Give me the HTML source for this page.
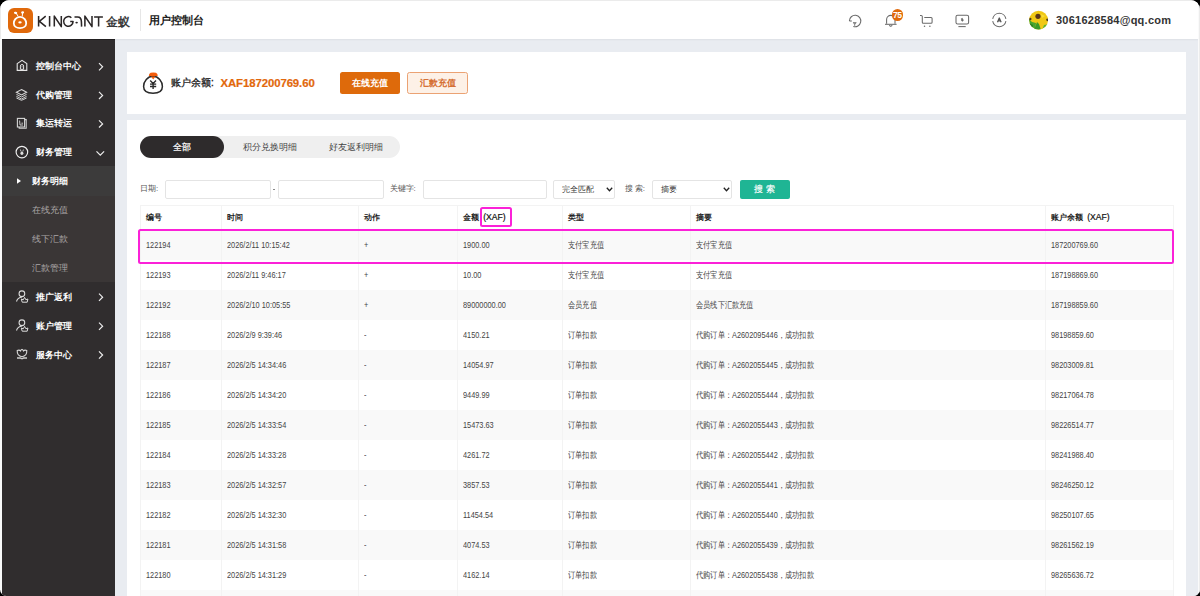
<!DOCTYPE html>
<html><head><meta charset="utf-8">
<style>
*{box-sizing:border-box;margin:0;padding:0}
html,body{width:1200px;height:596px;overflow:hidden;background:#000;font-family:"Liberation Sans",sans-serif}
.win{position:absolute;left:0;top:0;width:1200px;height:596px;border-radius:9.5px 9.5px 6.5px 6.5px;overflow:hidden;background:#fafafa}
.abs{position:absolute}
.hdr{position:absolute;left:1px;top:1px;width:1197px;height:38px;background:#fff}
.side{position:absolute;left:2px;top:39px;width:113px;height:560px;background:#302d2e}
.main{position:absolute;left:115px;top:39px;width:1083px;height:560px;background:#e9ecf1}
.shadow{position:absolute;left:115px;top:39px;width:1083px;height:2px;background:linear-gradient(#dde0e5,#e9ecf1)}
.card{position:absolute;background:#fff}
.t{position:absolute;white-space:nowrap;line-height:1}
.mi{position:absolute;left:0;width:113px;height:29px}
.mi .tx{position:absolute;left:33.5px;top:9.5px;font-size:9px;font-weight:bold;color:#fff;line-height:1;white-space:nowrap}
.mi .chev{position:absolute;left:96px;top:10px;width:6px;height:9px}
.sub .tx{position:absolute;left:31px;top:9.5px;font-size:9px;color:#a8a5a5;line-height:1;white-space:nowrap}
.tbl{position:absolute;left:140px;top:204.5px;width:1033px;border-collapse:collapse;table-layout:fixed;font-size:9.2px;color:#454545}
.tbl td i{font-style:normal;display:inline-block;transform:scaleX(.80);transform-origin:0 50%}
.tbl td,.tbl th{border:1px solid #f3f3f3;border-top:0;border-bottom:0;padding:0 0 0 5px;text-align:left;white-space:nowrap;overflow:hidden}
.tbl th{height:25px;border-top:1px solid #f3f3f3;font-weight:bold;font-size:7.6px;color:#222;letter-spacing:0}
.tbl td{height:30px}
.tbl tr.g td{background:#f9f9f9}
.inp{position:absolute;top:180px;height:18.5px;border:1px solid #e4e4e4;border-radius:2px;background:#fff}
.lbl{position:absolute;top:185px;font-size:8px;color:#555;line-height:1;white-space:nowrap}
</style></head><body>
<div class="win">
  <div class="abs" style="left:0;top:0;width:1200px;height:1px;background:#ebebeb"></div>
  <div class="abs" style="left:0;top:0;width:1.5px;height:39px;background:#ebebeb"></div>
  <div class="abs" style="left:1198.5px;top:0;width:1.5px;height:596px;background:#ececec"></div>
  <div class="hdr"></div>
  <!-- logo -->
  <svg class="abs" style="left:8px;top:8px" width="25" height="25" viewBox="0 0 25 25">
    <rect x="0" y="0" width="25" height="25" rx="6" fill="#e0690b"/>
    <path d="M12 8.9 C16.3 8.9 18.2 12.6 18.2 15.2 C18.2 18.4 15.4 20.1 12 20.1 C8.6 20.1 5.8 18.4 5.8 15.2 C5.8 12.6 7.7 8.9 12 8.9 Z" fill="none" stroke="#fff" stroke-width="1.8"/>
    <ellipse cx="12" cy="14.4" rx="1.7" ry="1.1" fill="#fff"/>
    <path d="M8.2 5.2 L10.3 8.6 M14.6 5 L14.2 8.6" stroke="#fff" stroke-width="1" fill="none"/>
    <ellipse cx="7.6" cy="4.9" rx="1.7" ry="1.15" fill="#fff" transform="rotate(15 7.6 4.9)"/>
    <ellipse cx="14.6" cy="4.4" rx="1.5" ry="1.1" fill="#fff" transform="rotate(-10 14.6 4.4)"/>
  </svg>
  <svg class="abs" style="left:0;top:0" width="110" height="36" viewBox="0 0 110 36" fill="none" stroke="#2a2626" stroke-width="1.55" stroke-linejoin="round">
    <path d="M38.6 16.1 V26.6 M45.7 16.2 L39.4 21.3 L45.9 26.6"/>
    <path d="M49.6 16.1 V26.6"/>
    <path d="M54.3 26.6 V16.1 L61.3 26.6 V16.1"/>
    <path d="M71.37 17.72 A4.7 4.85 0 1 0 73.05 21.4 H70.2"/>
    <path d="M74.5 16.9 H77.6 C80.1 16.9 81.3 18.9 81.4 21.6 L81.6 26.6"/>
    <ellipse cx="76.6" cy="22.6" rx="1.25" ry="0.9" fill="#2a2626" stroke="none"/>
    <path d="M84.9 26.6 V16.1 L92 26.6 V16.1"/>
    <path d="M94.1 16.9 H102.9 M98.6 16.9 V26.6"/>
  </svg>
  <div class="t" style="left:106px;top:16px;font-size:11.6px;color:#3a3a3a;font-weight:bold">金蚁</div>
  <div class="abs" style="left:139.5px;top:9px;width:1px;height:22px;background:#e6e6e6"></div>
  <div class="t" style="left:149px;top:15.2px;font-size:11px;color:#222;font-weight:bold">用户控制台</div>

  <!-- header icons -->
  <svg class="abs" style="left:0;top:0" width="1010" height="36" viewBox="0 0 1010 36" fill="none" stroke="#6a6a6a" stroke-width="1.05">
    <path d="M849.4 21 A5.7 5.7 0 1 1 853.3 26.4"/>
    <path d="M849.4 21 H851.8"/>
    <path d="M853 22.7 H856.4 M853.6 22.9 L854.7 24.1 L855.8 22.9 M854.7 24.1 V25.8" stroke-width="0.95"/>
    <path d="M886.6 23.8 V19.6 A4.2 4.2 0 0 1 895 19.6 V23.8"/>
    <path d="M885 24.3 H896.6"/>
    <path d="M889.6 25 A1.2 1.2 0 0 0 892 25"/>
    <path d="M920 15.4 H921.2 Q922.3 15.4 922.3 16.6 V22.3 Q922.3 23.3 923.3 23.3 H931.1 Q932.1 23.3 932.1 22.3 V18.5 Q932.1 17.5 931.1 17.5 H924.3"/>
    <circle cx="924.5" cy="26.3" r="0.75" fill="#6a6a6a" stroke="none"/>
    <circle cx="929.9" cy="26.3" r="0.75" fill="#6a6a6a" stroke="none"/>
    <rect x="956" y="15.2" width="12.6" height="8.8" rx="1.6"/>
    <path d="M958.4 26.6 H965.7"/>
    <path d="M961.4 18.6 L962.4 18.3 L963.4 20.4 L962.4 21.3 L961.5 20.7 Z" fill="#6a6a6a" stroke-width="0.6"/>
    <path d="M992.7 18.84 A6.7 6.7 0 0 1 1005.9 18.84 M1005.9 21.16 A6.7 6.7 0 0 1 992.7 21.16"/>
    <path d="M997.5 22.3 L999.3 18 L1001.1 22.3 M998.1 20.9 H1000.5" stroke="#555" stroke-width="1.3" stroke-linejoin="round"/>
  </svg>
  <div class="abs" style="left:891.5px;top:9px;width:11.6px;height:11.6px;border-radius:6px;background:#e0690b;color:#fff;font-size:8.6px;font-weight:bold;line-height:12px;text-align:center;letter-spacing:-0.4px">75</div>
  <svg class="abs" style="left:1029px;top:10px" width="20" height="20" viewBox="0 0 20 20">
    <defs><clipPath id="cc"><circle cx="9.6" cy="10.2" r="9.4"/></clipPath></defs>
    <g clip-path="url(#cc)">
      <rect width="20" height="20" fill="#f0c814"/>
      <path d="M0 9 L3 12 L7 13 L6 20 H0 Z" fill="#47a52e"/>
      <path d="M5 20 L8 12 L10 14 L12 20 Z" fill="#3b9a28"/>
      <path d="M13 20 L15 15 L20 14 V20 Z" fill="#5bb536"/>
      <path d="M0 13 L4 15 L3 20 H0 Z" fill="#2d7e22"/>
      <circle cx="9" cy="6.3" r="2.6" fill="#5a3518"/>
      <circle cx="1.2" cy="9" r="1.3" fill="#4a3a1a"/>
      <circle cx="18.6" cy="9.8" r="1.4" fill="#4a3a1a"/>
      <path d="M12 4 L16 6 L13 8 Z" fill="#f7dc3a"/>
    </g>
  </svg>
  <div class="t" style="left:1056px;top:14.6px;font-size:11px;font-weight:bold;color:#333;letter-spacing:0.25px">3061628584@qq.com</div>

  <!-- sidebar -->
  <div class="side"></div>
  <div class="abs" style="left:2px;top:39px;width:113px;height:1px;background:#222021"></div>
  <div class="abs" style="left:2px;top:166px;width:113px;height:116px;background:#3a3636"></div>
  <div class="abs" style="left:2px;top:166px;width:113px;height:29.5px;background:#3c3b3b"></div>
  <div class="t" style="left:35.7px;top:61.9px;font-size:8.7px;color:#fff;font-weight:bold;">控制台中心</div>
  <div class="t" style="left:35.7px;top:90.9px;font-size:8.7px;color:#fff;font-weight:bold;">代购管理</div>
  <div class="t" style="left:35.7px;top:119.4px;font-size:8.7px;color:#fff;font-weight:bold;">集运转运</div>
  <div class="t" style="left:35.7px;top:148.4px;font-size:8.7px;color:#fff;font-weight:bold;">财务管理</div>
  <div class="t" style="left:31.6px;top:177.1px;font-size:8.7px;color:#fff;font-weight:bold;">财务明细</div>
  <div class="t" style="left:31.7px;top:206.1px;font-size:8.7px;color:#aaa6a6;">在线充值</div>
  <div class="t" style="left:31.7px;top:234.9px;font-size:8.7px;color:#aaa6a6;">线下汇款</div>
  <div class="t" style="left:31.7px;top:263.5px;font-size:8.7px;color:#aaa6a6;">汇款管理</div>
  <div class="t" style="left:35.7px;top:292.9px;font-size:8.7px;color:#fff;font-weight:bold;">推广返利</div>
  <div class="t" style="left:35.7px;top:321.9px;font-size:8.7px;color:#fff;font-weight:bold;">账户管理</div>
  <div class="t" style="left:35.7px;top:350.7px;font-size:8.7px;color:#fff;font-weight:bold;">服务中心</div>
  <svg class="abs" style="left:0;top:0" width="115" height="370" viewBox="0 0 115 370" fill="none" stroke="#e6e6e6" stroke-width="1.1">
    <path d="M17.2 63.6 L22 60.3 L26.8 63.6 V70.4 H17.2 Z"/>
    <path d="M20.4 66.1 A1.6 1.6 0 0 1 23.6 66.1 V69.3 H20.4 Z" stroke-width="1"/>
    <circle cx="22" cy="66.8" r="0.55" fill="#e6e6e6" stroke="none"/>
    <path d="M21.5 89.6 L26.6 92.3 L21.5 95 L16.4 92.3 Z" stroke="#d8d8d8"/>
    <path d="M16.4 94.3 L21.5 97 L26.6 94.3 M16.4 96.3 L21.5 99 L26.6 96.3 M16.4 98 L21.5 100.3 L26.6 98" stroke="#cfcfcf" stroke-width="1"/>
    <rect x="17.4" y="118.4" width="7.2" height="8.6" stroke="#d6d6d6"/>
    <path d="M24.6 119.6 H26.2 V128.2 H19.2 V127" stroke="#cfcfcf"/>
    <path d="M19.6 120.6 L20 125 H23 M21.4 123.2 H23" stroke="#c8c8c8" stroke-width="1"/>
    <circle cx="21.9" cy="152.1" r="5.8" stroke="#eeeeee" stroke-width="1.15"/>
    <ellipse cx="21.9" cy="153.3" rx="1.5" ry="1.7" fill="#ddd" stroke="none"/>
    <path d="M20.4 149.5 L21 151.5 M23.4 149.5 L22.8 151.5" stroke="#cfcfcf" stroke-width="0.9"/>
    <path d="M99 63.2 L102.6 66.8 L99 70.4 M99 91.8 L102.6 95.4 L99 99 M99 120.3 L102.6 123.9 L99 127.5 M99 293.6 L102.6 297.2 L99 300.8 M99 322.6 L102.6 326.2 L99 329.8 M99 351.4 L102.6 355 L99 358.6" stroke="#eeeeee" stroke-width="1.2"/>
    <path d="M96.5 151.3 L100.3 155.1 L104.1 151.3" stroke="#eeeeee" stroke-width="1.2"/>
    <path d="M17 178.2 L21 181 L17 183.8 Z" fill="#fff" stroke="none"/>
    <circle cx="21.9" cy="293.7" r="2.85" stroke="#dcdcdc" stroke-width="1.05"/>
    <path d="M16.5 301.5 Q17.5 297.6 22.3 297" stroke="#dcdcdc" stroke-width="1.05"/>
    <path d="M21.3 299 L22.2 302.2 H27.2 L27.9 299 L25.9 299.8 L24.6 297.4 L23.3 299.8 Z" stroke="#dcdcdc" stroke-width="1"/>
    <circle cx="21.9" cy="322.7" r="2.85" stroke="#dcdcdc" stroke-width="1.05"/>
    <path d="M16.5 330.5 Q17.5 326.6 22.3 326" stroke="#dcdcdc" stroke-width="1.05"/>
    <path d="M21.3 328 L22.2 331.2 H27.2 L27.9 328 L25.9 328.8 L24.6 326.4 L23.3 328.8 Z" stroke="#dcdcdc" stroke-width="1"/>
    <path d="M17.2 350.6 Q19.4 349.6 20.5 351 Q21.4 349 22 349.2 Q22.6 349 23.5 351 Q24.6 349.6 26.8 350.6 Q27 356.2 22 356.7 Q17 356.2 17.2 350.6 Z" stroke="#d8d8d8" stroke-width="1.1"/>
    <path d="M17 358 H20.5 Q22 359.3 23.5 358 H27" stroke="#cfcfcf" stroke-width="1.3"/>
  </svg>


  <div class="main"></div>
  <div class="shadow"></div>

  <!-- card 1 -->
  <div class="card" style="left:127px;top:52px;width:1059px;height:62px"></div>
  <svg class="abs" style="left:141px;top:70px" width="24" height="26" viewBox="0 0 24 26">
    <path d="M12 6.3 C17.4 6.3 21.4 11.2 21.4 16.5 C21.4 21 17.4 23.2 12 23.2 C6.6 23.2 2.6 21 2.6 16.5 C2.6 11.2 6.6 6.3 12 6.3 Z" fill="none" stroke="#2a2a2a" stroke-width="1.5"/>
    <path d="M7.9 6.1 Q7.7 3.5 9.6 2.8 Q12.3 2.1 15 2.8 Q16.9 3.5 16.7 6.1 Z" fill="#f35c0b"/>
    <path d="M10 6.4 H14.4 L12.2 9.6 Z" fill="#f35c0b"/>
    <path d="M9.2 10.6 L12.1 13.5 L15 10.6 M9 14.1 H15.2 M9 16.5 H15.2 M12.1 13.5 V19" fill="none" stroke="#2a2a2a" stroke-width="1.4"/>
  </svg>
  <div class="t" style="left:171px;top:77.5px;font-size:10px;color:#1e1e1e;-webkit-text-stroke:0.3px #1e1e1e">账户余额:</div>
  <div class="t" style="left:220.5px;top:77.5px;font-size:11.4px;color:#e2680c;font-weight:bold;letter-spacing:-0.1px;-webkit-text-stroke:0.2px #e2680c">XAF187200769.60</div>
  <div class="abs" style="left:340px;top:72px;width:60px;height:22px;background:#de6a0b;border-radius:2.5px;color:#fff;font-size:9px;font-weight:bold;line-height:22px;text-align:center">在线充值</div>
  <div class="abs" style="left:407px;top:72px;width:61px;height:22px;background:#fdf1e7;border:1px solid #eba273;border-radius:2.5px;color:#d4692a;font-size:9px;-webkit-text-stroke:0.35px #d4692a;line-height:20px;text-align:center">汇款充值</div>

  <!-- card 2 -->
  <div class="card" style="left:127px;top:120px;width:1059px;height:480px"></div>
  <div class="abs" style="left:139.5px;top:136px;width:260px;height:22px;border-radius:11px;background:#efefef"></div>
  <div class="abs" style="left:139.5px;top:136px;width:84px;height:22px;border-radius:11px;background:#2e2b2c;color:#fff;font-size:9px;line-height:22px;text-align:center;-webkit-text-stroke:0.2px #fff">全部</div>
  <div class="t" style="left:242.7px;top:142.7px;font-size:8.8px;color:#444">积分兑换明细</div>
  <div class="t" style="left:329.2px;top:142.7px;font-size:8.8px;color:#444">好友返利明细</div>

  <div class="lbl" style="left:140px">日期:</div>
  <div class="inp" style="left:165px;width:106px"></div>
  <div class="abs" style="left:273px;top:189px;width:1.5px;height:1px;background:#888"></div>
  <div class="inp" style="left:278px;width:106px"></div>
  <div class="lbl" style="left:389.5px">关键字:</div>
  <div class="inp" style="left:422.5px;width:124px"></div>
  <div class="inp" style="left:553px;width:62px"><div class="t" style="left:8px;top:4.5px;font-size:8px;color:#333">完全匹配</div>
    <svg class="abs" style="left:52px;top:6px" width="7" height="5" viewBox="0 0 7 5" fill="none" stroke="#222" stroke-width="1.3"><path d="M0.8 0.8 L3.5 3.8 L6.2 0.8"/></svg></div>
  <div class="lbl" style="left:624.5px">搜 索:</div>
  <div class="inp" style="left:652px;width:80px"><div class="t" style="left:8px;top:4.5px;font-size:8px;color:#333">摘要</div>
    <svg class="abs" style="left:70px;top:6px" width="7" height="5" viewBox="0 0 7 5" fill="none" stroke="#222" stroke-width="1.3"><path d="M0.8 0.8 L3.5 3.8 L6.2 0.8"/></svg></div>
  <div class="abs" style="left:739.5px;top:180px;width:50px;height:18.5px;border-radius:2px;background:#1fb594;color:#fff;font-size:9px;line-height:18.5px;-webkit-text-stroke:0.2px #fff;text-align:center">搜 索</div>

  <table class="tbl">
    <colgroup><col style="width:81px"><col style="width:137px"><col style="width:99px"><col style="width:105px"><col style="width:128px"><col style="width:355px"><col style="width:128px"></colgroup>
    <tr><th>编号</th><th>时间</th><th>动作</th><th>金额 &nbsp;<span style="font-weight:normal;font-size:8.6px;color:#111;-webkit-text-stroke:0.2px #111">(XAF)</span></th><th>类型</th><th>摘要</th><th>账户余额 &nbsp;<span style="font-weight:normal;font-size:8.6px;color:#111;-webkit-text-stroke:0.2px #111">(XAF)</span></th></tr>
    <tr class="g"><td><i>122194</i></td><td><i>2026/2/11 10:15:42</i></td><td><i>+</i></td><td><i>1900.00</i></td><td><i>支付宝充值</i></td><td><i>支付宝充值</i></td><td><i>187200769.60</i></td></tr>
    <tr><td><i>122193</i></td><td><i>2026/2/11 9:46:17</i></td><td><i>+</i></td><td><i>10.00</i></td><td><i>支付宝充值</i></td><td><i>支付宝充值</i></td><td><i>187198869.60</i></td></tr>
    <tr class="g"><td><i>122192</i></td><td><i>2026/2/10 10:05:55</i></td><td><i>+</i></td><td><i>89000000.00</i></td><td><i>会员充值</i></td><td><i>会员线下汇款充值</i></td><td><i>187198859.60</i></td></tr>
    <tr><td><i>122188</i></td><td><i>2026/2/9 9:39:46</i></td><td><i>-</i></td><td><i>4150.21</i></td><td><i>订单扣款</i></td><td><i>代购订单：A2602095446，成功扣款</i></td><td><i>98198859.60</i></td></tr>
    <tr class="g"><td><i>122187</i></td><td><i>2026/2/5 14:34:46</i></td><td><i>-</i></td><td><i>14054.97</i></td><td><i>订单扣款</i></td><td><i>代购订单：A2602055445，成功扣款</i></td><td><i>98203009.81</i></td></tr>
    <tr><td><i>122186</i></td><td><i>2026/2/5 14:34:20</i></td><td><i>-</i></td><td><i>9449.99</i></td><td><i>订单扣款</i></td><td><i>代购订单：A2602055444，成功扣款</i></td><td><i>98217064.78</i></td></tr>
    <tr class="g"><td><i>122185</i></td><td><i>2026/2/5 14:33:54</i></td><td><i>-</i></td><td><i>15473.63</i></td><td><i>订单扣款</i></td><td><i>代购订单：A2602055443，成功扣款</i></td><td><i>98226514.77</i></td></tr>
    <tr><td><i>122184</i></td><td><i>2026/2/5 14:33:28</i></td><td><i>-</i></td><td><i>4261.72</i></td><td><i>订单扣款</i></td><td><i>代购订单：A2602055442，成功扣款</i></td><td><i>98241988.40</i></td></tr>
    <tr class="g"><td><i>122183</i></td><td><i>2026/2/5 14:32:57</i></td><td><i>-</i></td><td><i>3857.53</i></td><td><i>订单扣款</i></td><td><i>代购订单：A2602055441，成功扣款</i></td><td><i>98246250.12</i></td></tr>
    <tr><td><i>122182</i></td><td><i>2026/2/5 14:32:30</i></td><td><i>-</i></td><td><i>11454.54</i></td><td><i>订单扣款</i></td><td><i>代购订单：A2602055440，成功扣款</i></td><td><i>98250107.65</i></td></tr>
    <tr class="g"><td><i>122181</i></td><td><i>2026/2/5 14:31:58</i></td><td><i>-</i></td><td><i>4074.53</i></td><td><i>订单扣款</i></td><td><i>代购订单：A2602055439，成功扣款</i></td><td><i>98261562.19</i></td></tr>
    <tr><td><i>122180</i></td><td><i>2026/2/5 14:31:29</i></td><td><i>-</i></td><td><i>4162.14</i></td><td><i>订单扣款</i></td><td><i>代购订单：A2602055438，成功扣款</i></td><td><i>98265636.72</i></td></tr>
    <tr class="g"><td><i>122179</i></td><td><i>2026/2/5 14:31:00</i></td><td><i>-</i></td><td><i>4100.00</i></td><td><i>订单扣款</i></td><td><i>代购订单：A2602055437，成功扣款</i></td><td><i>98269798.86</i></td></tr>
  </table>

  <!-- magenta highlights -->
  <div class="abs" style="left:138px;top:228.5px;width:1036px;height:35.5px;border:2.5px solid #fb21d8;border-radius:2.5px"></div>
  <div class="abs" style="left:480px;top:207px;width:31.5px;height:19.5px;border:2.5px solid #fb21d8;border-radius:2.5px"></div>
</div>
</body></html>
